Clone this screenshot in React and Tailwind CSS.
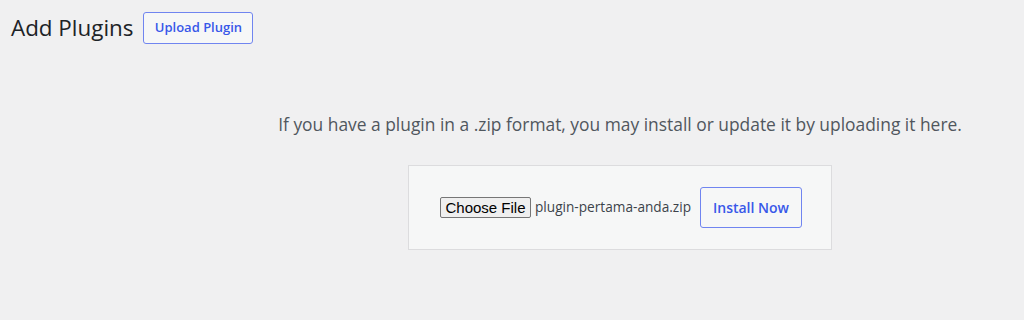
export default function App() {
  return (
    <div className="min-h-screen bg-[#f0f0f1] font-['Open_Sans',sans-serif] text-[#3c434a]">
      <div className="flex items-center pl-[11px] pt-[12px]">
        <h1 className="text-[22.4px] leading-[32px] font-normal text-[#1d2327]">Add Plugins</h1>
        <button
          type="button"
          className="ml-[10px] h-[32px] w-[110px] rounded-[3px] border border-[#7085f0] bg-[#f6f7f7] text-[13px] font-semibold text-[#3858e9]"
        >
          Upload Plugin
        </button>
      </div>

      <div className="pl-[216px] text-center">
        <p className="mt-[68px] text-[17.4px] leading-[24px] text-[#50575e]">
          If you have a plugin in a .zip format, you may install or update it by uploading it here.
        </p>
        <form className="mx-auto mt-[29px] flex h-[85px] w-[424px] items-center border border-[#dcdcde] bg-[#f6f7f7] pl-[31px]">
          <button
            type="button"
            className="h-[21px] w-[91px] rounded-[2px] border border-[#767676] bg-[#efefef] font-['Liberation_Sans',sans-serif] text-[15px] leading-[19px] text-black"
          >
            Choose File
          </button>
          <span className="ml-[4px] text-[13.65px] text-[#3c434a]">plugin-pertama-anda.zip</span>
          <button
            type="button"
            className="ml-auto mr-[29px] h-[41px] w-[102px] rounded-[3px] border border-[#7085f0] bg-[#f6f7f7] text-[14px] font-semibold text-[#3858e9]"
          >
            Install Now
          </button>
        </form>
      </div>
    </div>
  );
}
